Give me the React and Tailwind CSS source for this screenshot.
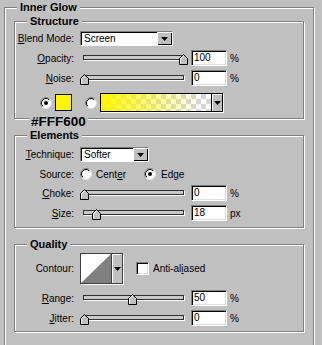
import React from "react";

function U({ children }) {
  return <span className="underline underline-offset-[1px] decoration-1">{children}</span>;
}

function Group({ title, className, children }) {
  return (
    <div
      className={`relative border border-[#808080] shadow-[inset_1px_1px_0_#fff,1px_1px_0_#fff] ${className}`}
    >
      <span className="absolute left-[12px] -top-[7px] px-[3px] bg-[#c0c0c0] font-bold text-[11px] leading-[13px]">
        {title}
      </span>
      {children}
    </div>
  );
}

function Tri() {
  return (
    <svg width="7" height="4" viewBox="0 0 7 4">
      <path d="M0 0h7L3.5 4z" fill="#000" />
    </svg>
  );
}

function ArrowBtn() {
  return (
    <div className="w-[15px] h-full bg-[#c0c0c0] shadow-[inset_1px_1px_0_#fff,inset_-1px_-1px_0_#000] flex items-center justify-center">
      <Tri />
    </div>
  );
}

function Select({ w, value }) {
  return (
    <div
      className={`flex h-[15px] bg-white border border-t-[#808080] border-l-[#808080] border-r-white border-b-white shadow-[inset_1px_1px_0_#000] ${w}`}
    >
      <span className="flex-1 pl-[3px] leading-[13px]">{value}</span>
      <ArrowBtn />
    </div>
  );
}

function Label({ children }) {
  return <div className="w-[59px] shrink-0 text-right whitespace-nowrap">{children}</div>;
}

function Thumb() {
  return (
    <svg width="9" height="11" viewBox="0 0 9 11">
      <path d="M4.5 0.5 L8.5 4.5 L8.5 10.5 L0.5 10.5 L0.5 4.5 Z" fill="#c0c0c0" stroke="#000" />
      <path d="M1.5 9.5 L1.5 4.9 L4.5 1.9" stroke="#fff" fill="none" />
    </svg>
  );
}

function Input({ value }) {
  return (
    <div className="w-[36px] h-[16px] bg-white border border-t-[#808080] border-l-[#808080] border-r-white border-b-white shadow-[inset_1px_1px_0_#000,inset_-1px_-1px_0_#dfdfdf] pl-[2px] leading-[14px]">
      {value}
    </div>
  );
}

function SliderRow({ label, pos, value, unit, className }) {
  return (
    <div className={`flex items-center h-[16px] ${className}`}>
      <Label>{label}</Label>
      <div className="relative ml-[6px] w-[111px] h-[16px] shrink-0">
        <div className="ml-[3px] mt-[5px] w-[101px] h-[5px] border border-[#303030] bg-[#c8c8c8] shadow-[1px_1px_0_#fff]" />
        <div className="absolute top-[4px] leading-[0]" style={{ left: pos }}>
          <Thumb />
        </div>
      </div>
      <Input value={value} />
      <span className="ml-[3px]">{unit}</span>
    </div>
  );
}

function Radio({ checked }) {
  return (
    <svg width="12" height="12" viewBox="0 0 12 12" className="shrink-0">
      <circle cx="6" cy="6" r="5.5" fill="#fff" stroke="#dfdfdf" />
      <path d="M2.1 9.9 A5.5 5.5 0 0 1 9.9 2.1" stroke="#808080" fill="none" />
      <path d="M2.8 9.2 A4.5 4.5 0 0 1 9.2 2.8" stroke="#000" fill="none" />
      {checked && <circle cx="6" cy="6" r="2" fill="#000" />}
    </svg>
  );
}

function Gradient() {
  return (
    <div className="ml-[3px] flex w-[123px] h-[19px] border border-black shadow-[1px_1px_0_#fff]">
      <svg width="110" height="17" className="shrink-0">
        <defs>
          <pattern id="chk" width="10" height="10" patternUnits="userSpaceOnUse">
            <rect width="10" height="10" fill="#fff" />
            <rect width="5" height="5" fill="#d6d6d6" />
            <rect x="5" y="5" width="5" height="5" fill="#d6d6d6" />
          </pattern>
          <linearGradient id="yg" x1="0" x2="1" y1="0" y2="0">
            <stop offset="0" stopColor="#fff600" />
            <stop offset="0.12" stopColor="#fff600" stopOpacity="0.85" />
            <stop offset="0.9" stopColor="#fff600" stopOpacity="0" />
          </linearGradient>
        </defs>
        <rect width="110" height="17" fill="url(#chk)" />
        <rect width="110" height="17" fill="url(#yg)" />
      </svg>
      <div className="flex-1 border-l border-black bg-[#c0c0c0] shadow-[inset_1px_1px_0_#fff] flex items-center justify-center">
        <Tri />
      </div>
    </div>
  );
}

function Checkbox() {
  return (
    <div className="w-[13px] h-[13px] bg-white border border-t-[#808080] border-l-[#808080] border-r-white border-b-white shadow-[inset_1px_1px_0_#000,inset_-1px_-1px_0_#dfdfdf] shrink-0" />
  );
}

function Contour() {
  return (
    <div className="flex w-[43px] h-[31px] border border-[#404040] bg-white shadow-[1px_1px_0_#fff]">
      <svg width="30" height="29" className="shrink-0">
        <path d="M0 29 L30 0 L30 29 Z" fill="#808080" />
      </svg>
      <div className="flex-1 border-l border-[#404040] bg-[#c0c0c0] shadow-[inset_1px_1px_0_#fff] flex items-center justify-center">
        <Tri />
      </div>
    </div>
  );
}

export default function App() {
  return (
    <div className="w-[322px] h-[345px] overflow-hidden bg-[#c0c0c0] pt-[7px] pl-[4px] pr-[8px] text-black text-[10px] leading-[13px] font-['Liberation_Sans',Arial,sans-serif]">
      <Group title="Inner Glow" className="h-[400px] px-[9px] pt-[13px]">
        <Group title="Structure" className="h-[98px] pt-[9px]">
          <div className="flex items-center h-[15px]">
            <Label>
              <U>B</U>lend Mode:
            </Label>
            <div className="ml-[6px]">
              <Select w="w-[93px]" value="Screen" />
            </div>
          </div>
          <SliderRow className="mt-[4px]" label={<><U>O</U>pacity:</>} pos={99} value="100" unit="%" />
          <SliderRow className="mt-[4px]" label={<><U>N</U>oise:</>} pos={0} value="0" unit="%" />
          <div className="mt-[7px] h-[19px] flex items-center pl-[25px]">
            <Radio checked />
            <div className="ml-[3px] w-[17px] h-[17px] bg-[#fff600] border border-black shrink-0" />
            <div className="ml-[13px] flex">
              <Radio />
            </div>
            <Gradient />
          </div>
          <span className="absolute left-[14px] -bottom-[12px] px-[2px] bg-[#c0c0c0] font-bold text-[13.5px] leading-[16px]">
            #FFF600
          </span>
        </Group>

        <Group title="Elements" className="mt-[16px] h-[93px] pt-[11px]">
          <div className="flex items-center h-[15px]">
            <Label>
              <U>T</U>echnique:
            </Label>
            <div className="ml-[6px]">
              <Select w="w-[69px]" value="Softer" />
            </div>
          </div>
          <div className="mt-[6px] flex items-center h-[12px]">
            <Label>Source:</Label>
            <div className="ml-[6px] flex items-center">
              <Radio />
              <span className="ml-[4px]">
                Cent<U>e</U>r
              </span>
              <div className="ml-[18px] flex">
                <Radio checked />
              </div>
              <span className="ml-[5px]">
                Ed<U>g</U>e
              </span>
            </div>
          </div>
          <SliderRow className="mt-[5px]" label={<><U>C</U>hoke:</>} pos={0} value="0" unit="%" />
          <SliderRow className="mt-[4px]" label={<><U>S</U>ize:</>} pos={12} value="18" unit="px" />
        </Group>

        <Group title="Quality" className="mt-[16px] h-[88px] pt-[8px]">
          <div className="flex items-center h-[31px]">
            <Label>Contour:</Label>
            <div className="ml-[6px]">
              <Contour />
            </div>
            <div className="ml-[13px]">
              <Checkbox />
            </div>
            <span className="ml-[4px]">
              Anti-al<U>i</U>ased
            </span>
          </div>
          <SliderRow className="mt-[6px]" label={<><U>R</U>ange:</>} pos={48} value="50" unit="%" />
          <SliderRow className="mt-[4px]" label={<><U>J</U>itter:</>} pos={0} value="0" unit="%" />
        </Group>
      </Group>
    </div>
  );
}
